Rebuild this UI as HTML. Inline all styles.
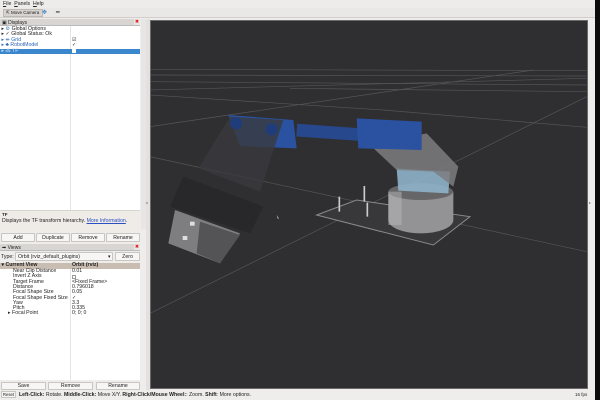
<!DOCTYPE html><html><head><style>
*{margin:0;padding:0;box-sizing:border-box}
body{width:600px;height:400px;overflow:hidden;background:#efedeb;font-family:"Liberation Sans",sans-serif;font-size:5.2px;color:#222;position:relative}
.a{position:absolute;white-space:nowrap}
.btn{position:absolute;background:#f7f6f5;border:1px solid #c9c5c1;border-radius:1px;text-align:center;line-height:8px;font-size:5.2px}
.hdr{position:absolute;left:0;width:140px;height:7px;background:#d8d5d2;border-bottom:1px solid #bbb}
.row{position:absolute;left:0;width:140px;height:5.6px;line-height:5.6px}
</style></head><body>
<div class="a" style="left:0;top:0;width:600px;height:8px;background:#eeecea"></div>
<div class="a" style="left:3px;top:1px"><u>F</u>ile&nbsp;&nbsp;<u>P</u>anels&nbsp;&nbsp;<u>H</u>elp</div>
<div class="a" style="left:0;top:8px;width:600px;height:10px;background:#eae8e6;border-bottom:1px solid #d0cdca"></div>
<div class="a" style="left:3px;top:9px;width:40px;height:8px;background:#d6d3d0;border:1px solid #bdb9b5;font-size:4.5px;line-height:6px;padding-left:2px">⇱ Move Camera</div>
<div class="a" style="left:42px;top:9px;color:#3a7fc4;font-size:6px">✥</div>
<div class="a" style="left:56px;top:9px;font-size:6px">━</div>
<div class="a" style="left:595px;top:0;width:5px;height:400px;background:#0b0b0b"></div>

<div class="a" style="left:0;top:19px;width:140px;height:191px;background:#fff"></div>
<div class="hdr" style="top:19px"></div>
<div class="a" style="left:2px;top:19.5px;font-size:5px">▣ Displays</div>
<div class="a" style="left:134px;top:19px;width:6px;height:6px;background:#e9e6e3;color:#d22;font-size:5px;line-height:6px;text-align:center">✖</div>
<div class="a" style="left:70px;top:26px;width:1px;height:184px;background:#e4e4e4"></div>
<div class="row" style="top:26.5px">&nbsp;▸ <span style="color:#3a7fc4">⚙</span> Global Options</div>
<div class="row" style="top:32px">&nbsp;▸ ✓ Global Status: Ok</div>
<div class="row" style="top:37.5px;color:#2a64b8">&nbsp;▸ ⇹ Grid<span class="a" style="left:72px;color:#222">☑</span></div>
<div class="row" style="top:43px;color:#2a64b8">&nbsp;▸ ♣ RobotModel<span class="a" style="left:72px;color:#222">✓</span></div>
<div class="row" style="top:48.5px;background:#3b87cd;color:#cfe1f3">&nbsp;▸ ⁂ TF<span class="a" style="left:72px;top:0.5px;width:4px;height:4px;background:#fff"></span></div>
<div class="a" style="left:141px;top:19px;width:5px;height:210px;background:#e8e6e4"></div>
<div class="a" style="left:0;top:210px;width:140px;height:22px;background:#efebe6;border-top:1px solid #d8d4d0"></div>
<div class="a" style="left:2px;top:212px;font-size:4.5px;font-weight:bold">TF</div>
<div class="a" style="left:2px;top:217.5px">Displays the TF transform hierarchy. <span style="color:#2a4fc4;text-decoration:underline">More Information</span>.</div>
<div class="btn" style="left:1px;top:233px;width:34px;height:9px">Add</div>
<div class="btn" style="left:36px;top:233px;width:34px;height:9px">Duplicate</div>
<div class="btn" style="left:71px;top:233px;width:34px;height:9px">Remove</div>
<div class="btn" style="left:106px;top:233px;width:34px;height:9px">Rename</div>
<div class="hdr" style="top:244px"></div>
<div class="a" style="left:2px;top:244.5px;font-size:5px">➡ Views</div>
<div class="a" style="left:134px;top:244px;width:6px;height:6px;background:#e9e6e3;color:#d22;font-size:5px;line-height:6px;text-align:center">✖</div>
<div class="a" style="left:1px;top:254px">Type:</div>
<div class="btn" style="left:15px;top:252px;width:98px;height:9px;text-align:left;padding-left:2px">Orbit (rviz_default_plugins)<span class="a" style="left:92px">▾</span></div>
<div class="btn" style="left:115px;top:252px;width:25px;height:9px">Zero</div>
<div class="a" style="left:0;top:263px;width:140px;height:117px;background:#fff"></div>
<div class="a" style="left:70px;top:263px;width:1px;height:117px;background:#e4e4e4"></div>
<div class="row" style="top:263px;background:#c9bcb0;font-weight:bold">&nbsp;▾ Current View<span class="a" style="left:72px">Orbit (rviz)</span></div>
<div class="row" style="top:269px;left:13px">Near Clip Distance<span class="a" style="left:59px">0.01</span></div>
<div class="row" style="top:274.3px;left:13px">Invert Z Axis<span class="a" style="left:59px;top:1px;width:4px;height:4px;border:0.5px solid #999"></span></div>
<div class="row" style="top:279.6px;left:13px">Target Frame<span class="a" style="left:59px">&lt;Fixed Frame&gt;</span></div>
<div class="row" style="top:284.9px;left:13px">Distance<span class="a" style="left:59px">0.796018</span></div>
<div class="row" style="top:290.2px;left:13px">Focal Shape Size<span class="a" style="left:59px">0.05</span></div>
<div class="row" style="top:295.5px;left:13px">Focal Shape Fixed Size<span class="a" style="left:59px">✓</span></div>
<div class="row" style="top:300.8px;left:13px">Yaw<span class="a" style="left:59px">3.3</span></div>
<div class="row" style="top:306.1px;left:13px">Pitch<span class="a" style="left:59px">0.335</span></div>
<div class="row" style="top:311.4px;left:8px">▸ Focal Point<span class="a" style="left:64px">0; 0; 0</span></div>
<div class="btn" style="left:1px;top:382px;width:45px;height:8px;line-height:7px">Save</div>
<div class="btn" style="left:48px;top:382px;width:45px;height:8px;line-height:7px">Remove</div>
<div class="btn" style="left:96px;top:382px;width:44px;height:8px;line-height:7px">Rename</div>
<div class="a" style="left:146px;top:19px;width:4px;height:371px;background:#e3e1df"></div>
<div class="a" style="left:145.5px;top:200px;font-size:4px;color:#777">◂</div>
<div class="a" style="left:589px;top:200px;font-size:4px;color:#777">▸</div>

<div class="a" style="left:1px;top:391px;width:15px;height:7px;border:1px solid #c9c5c1;background:#f5f4f3;font-size:4.3px;line-height:5px;text-align:center">Reset</div>
<div class="a" style="left:19px;top:391.5px"><b>Left-Click:</b> Rotate. <b>Middle-Click:</b> Move X/Y. <b>Right-Click/Mouse Wheel:</b>: Zoom. <b>Shift</b>: More options.</div>
<div class="a" style="left:575px;top:391.5px;font-size:4.5px">16 fps</div>

<div class="a" style="left:150px;top:20px;width:438px;height:369px;background:#2f2e31;border:1px solid #6a6a6c;overflow:hidden">
<svg width="438" height="369" viewBox="3 3 1314 1107" style="position:absolute;left:0;top:0">
<g stroke="#56565a" stroke-width="2" fill="none">
<path d="M0 880 L1310 230"/>
<path d="M0 410 L1310 695"/>
<path d="M0 320 L1150 150"/>
<path d="M0 148 L1310 152"/>
<path d="M0 165 L1310 168"/>
<path d="M0 185 L1310 195"/>
<path d="M0 210 L1310 175"/>
<path d="M0 225 L700 270 L1310 322"/>
<path d="M420 205 L1310 215"/>
</g>
<polygon points="500,585 620,540 960,590 850,675" fill="#38383a" stroke="#8a8a8a" stroke-width="3"/>
<g stroke="#ccc" stroke-width="5"><path d="M568 530V575M643 498V545M652 548V590"/></g>
<path d="M715 515 L910 515 L910 600 A97 40 0 0 1 715 600 Z" fill="#939395"/>
<ellipse cx="812" cy="515" rx="97" ry="25" fill="#666669"/>
<rect x="715" y="515" width="40" height="100" fill="#b8b8ba" opacity=".5"/>
<polygon points="740,445 900,455 895,520 745,512" fill="#8fb4ca" opacity=".9"/>
<polygon points="660,375 830,340 925,440 910,500 850,455 740,450" fill="#7d7d80" opacity=".85"/>
<rect x="440" y="318" width="190" height="38" fill="#27488c" transform="rotate(4 535 337)"/>
<polygon points="620,295 815,305 815,390 625,385" fill="#2a52a0"/>
<polygon points="235,285 430,300 440,385 270,378" fill="#2a52a0"/>
<polygon points="240,290 400,300 330,515 145,445" fill="#3a3a3e" opacity=".8"/>
<circle cx="258" cy="310" r="18" fill="#1f3d7a"/><circle cx="365" cy="328" r="18" fill="#1f3d7a"/>
<polygon points="100,470 340,560 300,640 60,560" fill="#28282a"/>
<polygon points="75,570 270,640 210,730 55,670" fill="#7e7e81"/>
<polygon points="150,605 270,645 210,730 140,700" fill="#545457"/>
<rect x="120" y="605" width="14" height="12" fill="#ddd"/><rect x="98" y="648" width="14" height="12" fill="#ddd"/>
<path d="M380 585 l6 10 l-2 2 z" fill="#fff"/>
</svg>
</div>
</body></html>
